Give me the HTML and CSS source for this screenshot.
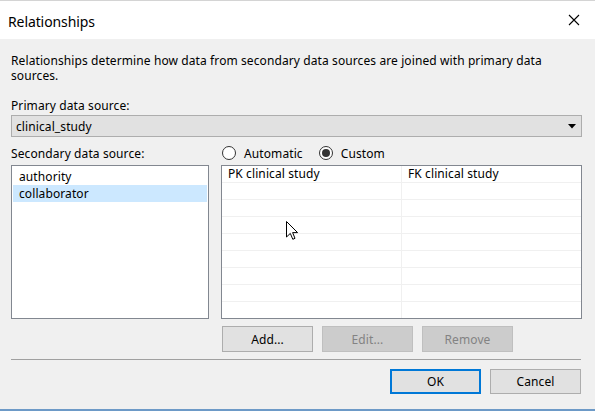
FILE: index.html
```html
<!DOCTYPE html>
<html>
<head>
<meta charset="utf-8">
<link rel="stylesheet" href="styles.css">
</head>
<body>
<div class="window">
  <div class="titlebar">
    <span class="title">Relationships</span>
    <svg class="close" width="12" height="12" viewBox="0 0 12 12"><path d="M1 1 L11 11 M11 1 L1 11" stroke="#000" stroke-width="1.1" fill="none"/></svg>
  </div>
  <div class="body">
    <p class="desc">Relationships determine how data from secondary data sources are joined with primary data sources.</p>
    <div class="label">Primary data source:</div>
    <div class="combo">
      <span>clinical_study</span>
      <svg class="arrow" width="8" height="5" viewBox="0 0 8 5"><path d="M0 0 L8 0 L4 4.5 Z" fill="#000"/></svg>
    </div>
    <div class="columns">
      <div class="left">
        <div class="label sec">Secondary data source:</div>
        <div class="listbox">
          <div class="item">authority</div>
          <div class="item selected">collaborator</div>
        </div>
      </div>
      <div class="right">
        <div class="radios">
          <span class="radio"><span class="circle"></span>Automatic</span>
          <span class="radio"><span class="circle checked"></span>Custom</span>
        </div>
        <div class="grid">
          <div class="row head"><div class="cell">PK clinical study</div><div class="cell">FK clinical study</div></div>
          <div class="row"><div class="cell"></div><div class="cell"></div></div>
          <div class="row"><div class="cell"></div><div class="cell"></div></div>
          <div class="row"><div class="cell"></div><div class="cell"></div></div>
          <div class="row"><div class="cell"></div><div class="cell"></div></div>
          <div class="row"><div class="cell"></div><div class="cell"></div></div>
          <div class="row"><div class="cell"></div><div class="cell"></div></div>
          <div class="row"><div class="cell"></div><div class="cell"></div></div>
          <div class="row"><div class="cell"></div><div class="cell"></div></div>
        </div>
        <div class="actions">
          <button class="btn">Add...</button>
          <button class="btn disabled">Edit...</button>
          <button class="btn disabled">Remove</button>
        </div>
      </div>
    </div>
    <div class="sep"></div>
    <div class="footer">
      <button class="btn default">OK</button>
      <button class="btn">Cancel</button>
    </div>
  </div>
  <svg class="cursor" width="13" height="20" viewBox="0 0 13 20"><path d="M0.5 0.5 L0.5 16 L4.3 12.4 L6.8 18.3 L9 17.3 L6.6 11.6 L11.6 11.6 Z" fill="#fff" stroke="#000" stroke-width="1" stroke-linejoin="miter"/></svg>
</div>
</body>
</html>
```
FILE: styles.css
```css
* { box-sizing: border-box; }
html, body { margin: 0; padding: 0; }
body {
  width: 595px;
  height: 411px;
  overflow: hidden;
  background: #f0f0f0;
  font-family: "Noto Sans", "Open Sans", sans-serif;
  font-size: 12px;
  letter-spacing: 0.1px;
  color: #000;
}
.window {
  position: relative;
  width: 595px;
  height: 411px;
  border-top: 1px solid #d4d4d4;
  border-bottom: 2px solid #6d9ac7;
}
.titlebar {
  height: 38px;
  background: #fff;
  display: flex;
  align-items: center;
  justify-content: space-between;
  padding: 0 15px 0 8px;
}
.title {
  font-size: 14px;
  letter-spacing: -0.1px;
  position: relative;
  top: 1px;
}
.close { display: block; }
.body {
  padding: 14px 13px 0 11px;
}
.desc {
  margin: 0;
  line-height: 15px;
  width: 565px;
}
.label {
  line-height: 15px;
}
.body > .label { margin-top: 15px; }
.combo {
  margin-top: 2px;
  height: 22px;
  background: #e1e1e1;
  border: 1px solid #adadad;
  display: flex;
  align-items: center;
  justify-content: space-between;
  padding: 0 5px 0 4px;
}
.arrow { display: block; }
.columns {
  display: flex;
  gap: 12px;
  margin-top: 7px;
}
.left { width: 198px; display: flex; flex-direction: column; }
.right { flex: 1; display: flex; flex-direction: column; }
.sec { margin-top: 2px; height: 19px; }
.listbox {
  height: 154px;
  background: #fff;
  border: 1px solid #828790;
  padding: 2px 1px;
}
.item {
  height: 17px;
  line-height: 17px;
  padding-left: 6px;
}
.item.selected { background: #cce8ff; }
.radios {
  height: 18px;
  margin-bottom: 3px;
  display: flex;
  align-items: center;
  padding-left: 1px;
}
.radio {
  display: flex;
  align-items: center;
  gap: 8px;
  margin-right: 16px;
}
.circle {
  width: 14px;
  height: 14px;
  border-radius: 50%;
  border: 1px solid #333;
  background: #fff;
  display: flex;
  align-items: center;
  justify-content: center;
}
.circle.checked::after {
  content: "";
  width: 8px;
  height: 8px;
  border-radius: 50%;
  background: #333;
}
.grid {
  height: 154px;
  background: #fff;
  border: 1px solid #828790;
  overflow: hidden;
}
.row {
  display: grid;
  grid-template-columns: 180px 1fr;
  height: 17px;
  border-bottom: 1px solid #f0f0f0;
}
.cell {
  line-height: 16px;
  padding-left: 6px;
}
.cell:first-child { border-right: 1px solid #f0f0f0; }
.actions {
  display: flex;
  gap: 9px;
  margin-top: 7px;
  padding-left: 1px;
}
.btn {
  width: 91px;
  height: 26px;
  background: #e1e1e1;
  border: 1px solid #adadad;
  font-family: inherit;
  font-size: 12px;
  letter-spacing: 0.1px;
  color: #000;
  padding: 0;
  margin: 0;
}
.btn.disabled {
  background: #cccccc;
  border-color: #bfbfbf;
  color: #838383;
}
.sep {
  margin-top: 7px;
  height: 1px;
  background: #a0a0a0;
  margin-right: 1px;
}
.footer {
  display: flex;
  justify-content: flex-end;
  gap: 9px;
  margin-top: 9px;
  padding-right: 1px;
}
.footer .btn { height: 25px; }
.btn.default { border: 2px solid #0078d7; }
.cursor {
  position: absolute;
  left: 286px;
  top: 220px;
}
```
